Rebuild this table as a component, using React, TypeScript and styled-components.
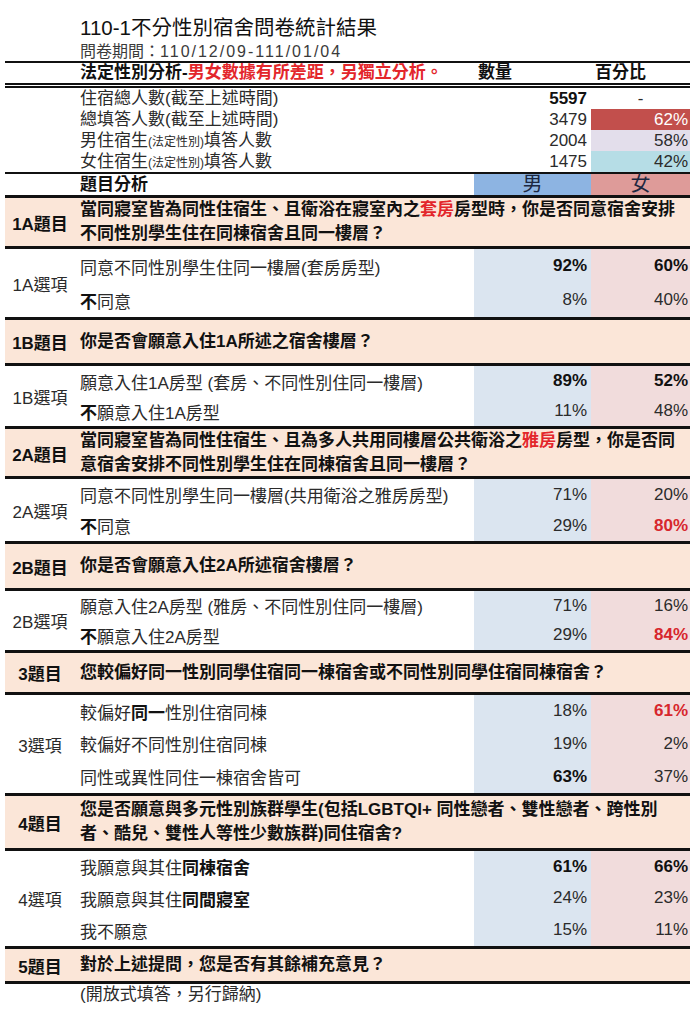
import React from "react";
import styled, { createGlobalStyle, css } from "styled-components";

const Global = createGlobalStyle`
  html, body { margin: 0; padding: 0; background: #fff; }
  body {
    font-family: "Liberation Sans", "Noto Sans CJK TC", sans-serif;
    color: #2b2b2b;
  }
`;

const cols = css`
  display: grid;
  grid-template-columns: 70px 399px 117px 99px;
`;

const Page = styled.div`
  width: 685px;
  margin-left: 5px;
`;

const Heading = styled.header`
  padding: 13px 0 0 75px;
  border-bottom: 2px solid #111;
`;

const Title = styled.h1`
  margin: 0;
  font-size: 20.5px;
  line-height: 29px;
  font-weight: 400;
  color: #111;
`;

const Period = styled.div`
  font-size: 16px;
  line-height: 19px;
  color: #3a3a3a;
`;

const PeriodDate = styled.span`
  letter-spacing: 2px;
`;

const AnalysisHead = styled.div`
  ${cols};
  height: 20px;
  align-items: center;
  font-size: 17px;
  font-weight: 700;
  color: #111;
  border-bottom: 5px double #111;
`;

const HeadCell = styled.div<{ $col: number; $pad?: number }>`
  grid-column: ${(p) => p.$col};
  padding-left: ${(p) => p.$pad ?? 0}px;
  white-space: nowrap;
  line-height: 20px;
`;

const Alert = styled.span`
  color: #e3262b;
`;

const StatsBlock = styled.div`
  ${cols};
  grid-auto-rows: 21px;
  border-bottom: 2px solid #111;
  font-size: 17px;
`;

const StatLabel = styled.div`
  grid-column: 2;
  padding-left: 5px;
  line-height: 21px;
  white-space: nowrap;
`;

const Small = styled.span`
  font-size: 12px;
`;

const StatNum = styled.div<{ $strong?: boolean }>`
  text-align: right;
  padding-right: 4px;
  line-height: 21px;
  font-weight: ${(p) => (p.$strong ? 700 : 400)};
  color: ${(p) => (p.$strong ? "#111" : "#2b2b2b")};
`;

const StatPct = styled.div<{ $bg?: string; $light?: boolean; $center?: boolean }>`
  text-align: ${(p) => (p.$center ? "center" : "right")};
  padding-right: ${(p) => (p.$center ? 0 : 2)}px;
  line-height: 21px;
  background: ${(p) => p.$bg ?? "transparent"};
  color: ${(p) => (p.$light ? "#fff" : "#2b2b2b")};
`;

const QuestionHead = styled.div`
  ${cols};
  height: 21px;
  border-bottom: 3px solid #111;
`;

const TopicTitle = styled.div`
  grid-column: 2;
  padding-left: 5px;
  font-size: 17px;
  font-weight: 700;
  line-height: 21px;
  color: #111;
`;

const GenderCell = styled.div<{ $bg: string }>`
  background: ${(p) => p.$bg};
  text-align: center;
  font-size: 20px;
  line-height: 21px;
  color: #1d2740;
`;

const Question = styled.div<{ $h: number }>`
  display: grid;
  grid-template-columns: 70px 1fr;
  align-items: center;
  height: ${(p) => p.$h}px;
  background: #fbe6d8;
  border-bottom: 3px solid #111;
  font-weight: 700;
  font-size: 17px;
  color: #111;
`;

const QLabel = styled.div`
  text-align: center;
  white-space: nowrap;
`;

const QText = styled.div`
  padding-left: 5px;
  line-height: 24px;
  white-space: nowrap;
`;

const Options = styled.div<{ $h: number; $n: number }>`
  ${cols};
  height: ${(p) => p.$h}px;
  grid-template-rows: repeat(${(p) => p.$n}, 1fr);
  border-bottom: 3px solid #111;
  font-size: 17px;
`;

const OptLabel = styled.div`
  grid-column: 1;
  grid-row: 1 / -1;
  align-self: center;
  text-align: center;
  white-space: nowrap;
`;

const OptText = styled.div`
  grid-column: 2;
  padding-left: 5px;
  display: flex;
  align-items: center;
  white-space: nowrap;
`;

const Pct = styled.div<{ $tone: "m" | "f"; $strong?: boolean; $red?: boolean }>`
  display: flex;
  align-items: center;
  justify-content: flex-end;
  padding-right: ${(p) => (p.$tone === "m" ? 4 : 2)}px;
  background: ${(p) => (p.$tone === "m" ? "#dbe5f0" : "#f1dcdc")};
  font-weight: ${(p) => (p.$strong || p.$red ? 700 : 400)};
  color: ${(p) => (p.$red ? "#d7262c" : p.$strong ? "#111" : "#2b2b2b")};
`;

const B = styled.b`
  font-weight: 700;
  color: #111;
`;

const Note = styled.div`
  padding-left: 75px;
  font-size: 17px;
  line-height: 22px;
`;

type Opt = {
  text: React.ReactNode;
  m: string;
  f: string;
  ms?: boolean;
  fs?: boolean;
  fr?: boolean;
};

type Section = {
  q: string;
  qh: number;
  text: React.ReactNode;
  o: string;
  oh: number;
  opts: Opt[];
};

const sections: Section[] = [
  {
    q: "1A題目",
    qh: 48,
    text: (
      <>
        當同寢室皆為同性住宿生、且衛浴在寢室內之<Alert>套房</Alert>房型時，你是否同意宿舍安排
        <br />
        不同性別學生住在同棟宿舍且同一樓層？
      </>
    ),
    o: "1A選項",
    oh: 68,
    opts: [
      { text: "同意不同性別學生住同一樓層(套房房型)", m: "92%", f: "60%", ms: true, fs: true },
      { text: <><B>不</B>同意</>, m: "8%", f: "40%" },
    ],
  },
  {
    q: "1B題目",
    qh: 43,
    text: "你是否會願意入住1A所述之宿舍樓層？",
    o: "1B選項",
    oh: 60,
    opts: [
      { text: "願意入住1A房型 (套房、不同性別住同一樓層)", m: "89%", f: "52%", ms: true, fs: true },
      { text: <><B>不</B>願意入住1A房型</>, m: "11%", f: "48%" },
    ],
  },
  {
    q: "2A題目",
    qh: 47,
    text: (
      <>
        當同寢室皆為同性住宿生、且為多人共用同樓層公共衛浴之<Alert>雅房</Alert>房型，你是否同
        <br />
        意宿舍安排不同性別學生住在同棟宿舍且同一樓層？
      </>
    ),
    o: "2A選項",
    oh: 62,
    opts: [
      { text: "同意不同性別學生同一樓層(共用衛浴之雅房房型)", m: "71%", f: "20%" },
      { text: <><B>不</B>同意</>, m: "29%", f: "80%", fr: true },
    ],
  },
  {
    q: "2B題目",
    qh: 44,
    text: "你是否會願意入住2A所述宿舍樓層？",
    o: "2B選項",
    oh: 59,
    opts: [
      { text: "願意入住2A房型 (雅房、不同性別住同一樓層)", m: "71%", f: "16%" },
      { text: <><B>不</B>願意入住2A房型</>, m: "29%", f: "84%", fr: true },
    ],
  },
  {
    q: "3題目",
    qh: 39,
    text: "您較偏好同一性別同學住宿同一棟宿舍或不同性別同學住宿同棟宿舍？",
    o: "3選項",
    oh: 98,
    opts: [
      { text: <>較偏好<B>同一</B>性別住宿同棟</>, m: "18%", f: "61%", fr: true },
      { text: "較偏好不同性別住宿同棟", m: "19%", f: "2%" },
      { text: "同性或異性同住一棟宿舍皆可", m: "63%", f: "37%", ms: true },
    ],
  },
  {
    q: "4題目",
    qh: 52,
    text: (
      <>
        您是否願意與多元性別族群學生(包括LGBTQI+ 同性戀者、雙性戀者、跨性別
        <br />
        者、酷兒、雙性人等性少數族群)同住宿舍?
      </>
    ),
    o: "4選項",
    oh: 95,
    opts: [
      { text: <>我願意與其住<B>同棟宿舍</B></>, m: "61%", f: "66%", ms: true, fs: true },
      { text: <>我願意與其住<B>同間寢室</B></>, m: "24%", f: "23%" },
      { text: "我不願意", m: "15%", f: "11%" },
    ],
  },
];

type Stat = {
  label: React.ReactNode;
  n: string;
  pct: string;
  strong?: boolean;
  center?: boolean;
  bg?: string;
  light?: boolean;
};

const stats: Stat[] = [
  { label: <>住宿總人數(截至上述時間)</>, n: "5597", strong: true, pct: "-", center: true },
  { label: <>總填答人數(截至上述時間)</>, n: "3479", pct: "62%", bg: "#c24f4c", light: true },
  { label: <>男住宿生<Small>(法定性別)</Small>填答人數</>, n: "2004", pct: "58%", bg: "#e3deeb" },
  { label: <>女住宿生<Small>(法定性別)</Small>填答人數</>, n: "1475", pct: "42%", bg: "#b6dde6" },
];

export default function App() {
  return (
    <Page>
      <Global />
      <Heading>
        <Title>110-1不分性別宿舍問卷統計結果</Title>
        <Period>
          問卷期間：<PeriodDate>110/12/09-111/01/04</PeriodDate>
        </Period>
      </Heading>

      <AnalysisHead>
        <HeadCell $col={2} $pad={5}>
          法定性別分析-<Alert>男女數據有所差距，另獨立分析。</Alert>
        </HeadCell>
        <HeadCell $col={3} $pad={4}>數量</HeadCell>
        <HeadCell $col={4} $pad={4}>百分比</HeadCell>
      </AnalysisHead>

      <StatsBlock>
        {stats.map((s, i) => (
          <React.Fragment key={i}>
            <StatLabel>{s.label}</StatLabel>
            <StatNum $strong={s.strong}>{s.n}</StatNum>
            <StatPct $bg={s.bg} $light={s.light} $center={s.center}>
              {s.pct}
            </StatPct>
          </React.Fragment>
        ))}
      </StatsBlock>

      <QuestionHead>
        <TopicTitle>題目分析</TopicTitle>
        <GenderCell $bg="#8db4e2">男</GenderCell>
        <GenderCell $bg="#de9b99">女</GenderCell>
      </QuestionHead>

      {sections.map((s) => (
        <React.Fragment key={s.q}>
          <Question $h={s.qh}>
            <QLabel>{s.q}</QLabel>
            <QText>{s.text}</QText>
          </Question>
          <Options $h={s.oh} $n={s.opts.length}>
            <OptLabel>{s.o}</OptLabel>
            {s.opts.map((o, i) => (
              <React.Fragment key={i}>
                <OptText>{o.text}</OptText>
                <Pct $tone="m" $strong={o.ms}>{o.m}</Pct>
                <Pct $tone="f" $strong={o.fs} $red={o.fr}>{o.f}</Pct>
              </React.Fragment>
            ))}
          </Options>
        </React.Fragment>
      ))}

      <Question $h={32}>
        <QLabel>5題目</QLabel>
        <QText>對於上述提問，您是否有其餘補充意見？</QText>
      </Question>
      <Note>(開放式填答，另行歸納)</Note>
    </Page>
  );
}
